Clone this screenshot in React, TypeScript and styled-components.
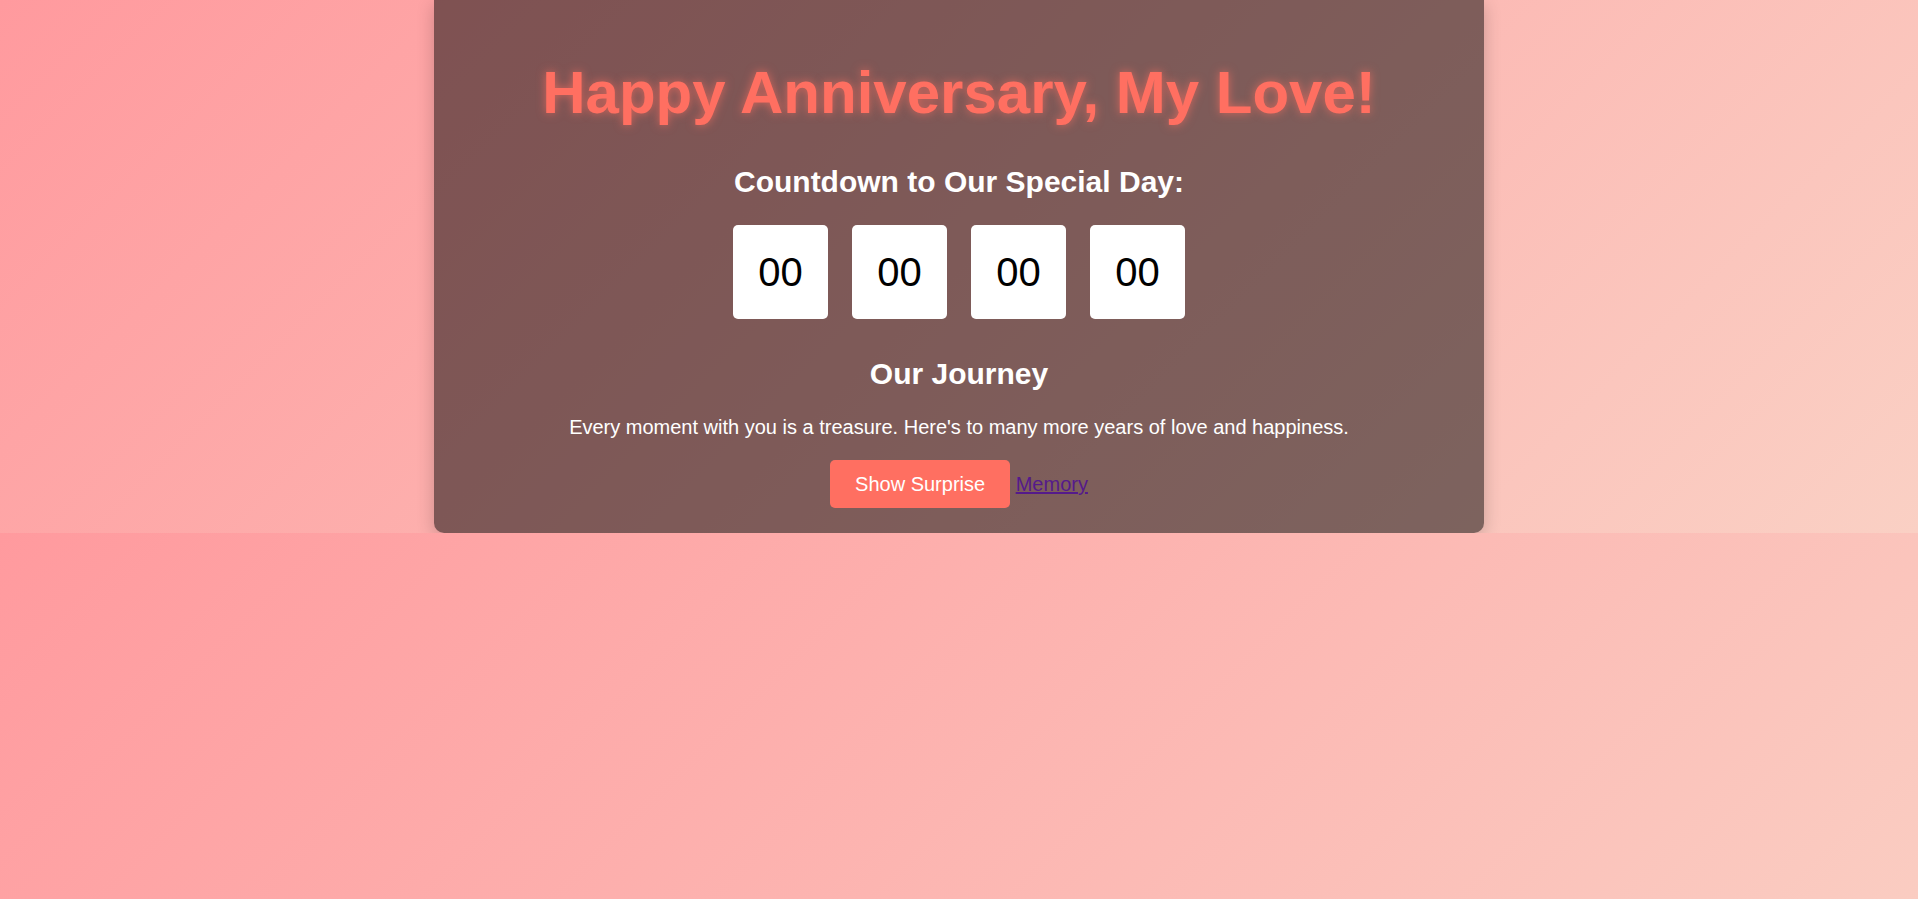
import React from "react";
import styled, { createGlobalStyle } from "styled-components";

const GlobalStyle = createGlobalStyle`
  body {
    margin: 0;
    font-family: "Liberation Sans", Arial, sans-serif;
    font-size: 20px;
    background: linear-gradient(135deg, #ff9a9e 0%, #fad0c4 100%);
  }
`;

const Page = styled.main`
  display: flex;
  justify-content: center;
`;

const Card = styled.section`
  width: 1050px;
  box-sizing: border-box;
  padding: 18px 20px 25px;
  background: rgba(0, 0, 0, 0.5);
  border-radius: 0 0 10px 10px;
  box-shadow: 0 4px 18px rgba(0, 0, 0, 0.2);
  text-align: center;
  color: #fff;
`;

const Title = styled.h1`
  margin: 40px 0 0;
  font-size: 60px;
  font-weight: bold;
  color: #ff6f61;
  text-shadow: 0 0 10px rgba(255, 111, 97, 0.7);
`;

const Heading = styled.h2<{ $top: number }>`
  margin: ${(p) => p.$top}px 0 0;
  font-size: 30px;
  font-weight: bold;
  color: #fff;
`;

const Countdown = styled.div`
  display: flex;
  justify-content: center;
  gap: 24px;
  margin-top: 25.5px;
`;

const TimeBox = styled.div`
  width: 95px;
  height: 94px;
  box-sizing: border-box;
  padding-top: 2px;
  display: flex;
  align-items: center;
  justify-content: center;
  background: #fff;
  border-radius: 5px;
  color: #000;
  font-size: 40px;
`;

const Message = styled.p`
  margin: 24.5px 0 0;
  font-size: 20px;
  color: #fff;
`;

const Actions = styled.div`
  margin-top: 21.5px;
  font-size: 20px;
`;

const SurpriseButton = styled.button`
  font-family: "Liberation Sans", Arial, sans-serif;
  font-size: 20px;
  line-height: 24px;
  padding: 12px 25px;
  border: none;
  border-radius: 5px;
  background: #ff6f61;
  color: #fff;
  cursor: pointer;
`;

const MemoryLink = styled.a`
  color: #551a8b;
  text-decoration: underline;
`;

export default function App() {
  return (
    <>
      <GlobalStyle />
      <Page>
        <Card>
          <Title>Happy Anniversary, My Love!</Title>
          <Heading $top={38}>Countdown to Our Special Day:</Heading>
          <Countdown>
            <TimeBox>00</TimeBox>
            <TimeBox>00</TimeBox>
            <TimeBox>00</TimeBox>
            <TimeBox>00</TimeBox>
          </Countdown>
          <Heading $top={38.5}>Our Journey</Heading>
          <Message>
            Every moment with you is a treasure. Here's to many more years of love and happiness.
          </Message>
          <Actions>
            <SurpriseButton>Show Surprise</SurpriseButton>{" "}
            <MemoryLink href="#memory">Memory</MemoryLink>
          </Actions>
        </Card>
      </Page>
    </>
  );
}
